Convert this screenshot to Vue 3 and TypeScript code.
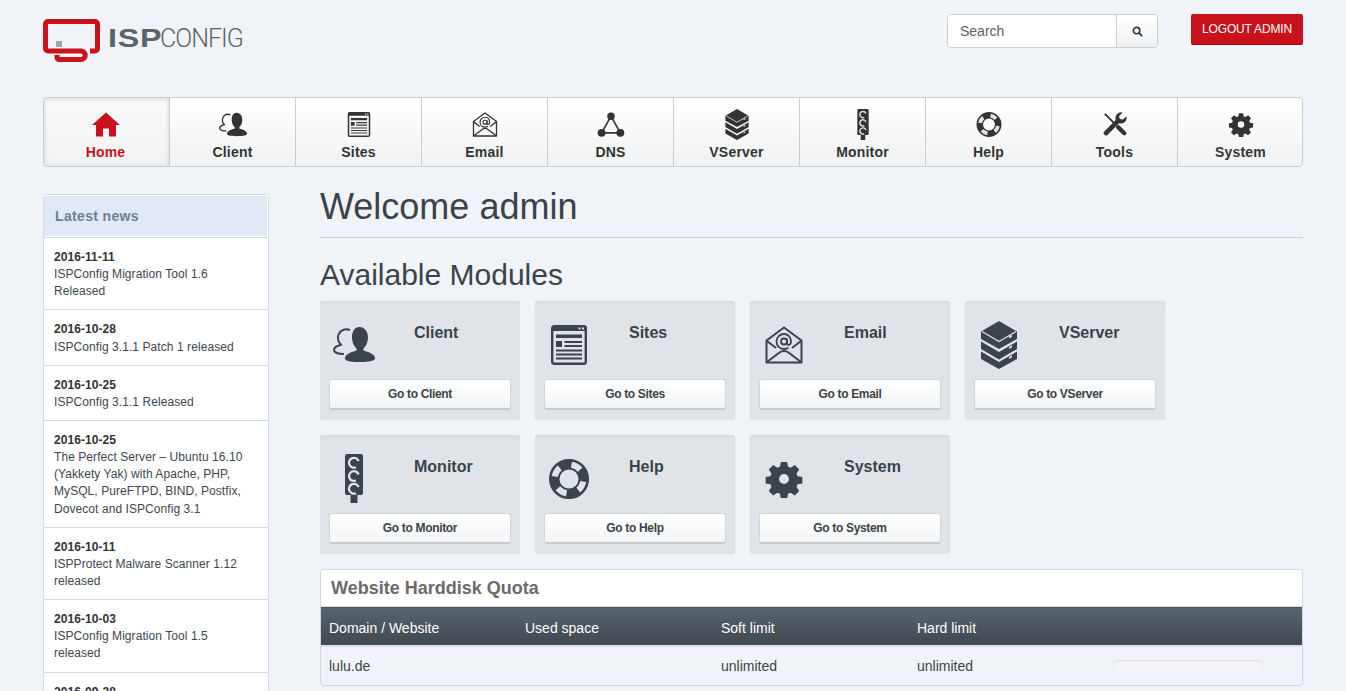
<script setup lang="ts">
interface Module {
  name: string;
  icon: string;
}

const navItems: Module[] = [
  { name: 'Home', icon: 'home' },
  { name: 'Client', icon: 'client' },
  { name: 'Sites', icon: 'sites' },
  { name: 'Email', icon: 'email' },
  { name: 'DNS', icon: 'dns' },
  { name: 'VServer', icon: 'vserver' },
  { name: 'Monitor', icon: 'monitor' },
  { name: 'Help', icon: 'help' },
  { name: 'Tools', icon: 'tools' },
  { name: 'System', icon: 'system' },
];

const modules = navItems.filter(m => !['Home', 'DNS', 'Tools'].includes(m.name));

const news = [
  { date: '2016-11-11', title: 'ISPConfig Migration Tool 1.6 Released' },
  { date: '2016-10-28', title: 'ISPConfig 3.1.1 Patch 1 released' },
  { date: '2016-10-25', title: 'ISPConfig 3.1.1 Released' },
  { date: '2016-10-25', title: 'The Perfect Server – Ubuntu 16.10 (Yakkety Yak) with Apache, PHP, MySQL, PureFTPD, BIND, Postfix, Dovecot and ISPConfig 3.1' },
  { date: '2016-10-11', title: 'ISPProtect Malware Scanner 1.12 released' },
  { date: '2016-10-03', title: 'ISPConfig Migration Tool 1.5 released' },
  { date: '2016-09-28', title: 'ISPConfig 3.1 Released' },
];
</script>

<template>
  <div class="page">
    <svg class="sprite" aria-hidden="true">
      <symbol id="i-home" viewBox="0 0 28 24">
        <path fill="currentColor" d="M14 0 28 12.500h-4V24h-7v-8h-6v8H4V12.500H0z" />
      </symbol>
      <symbol id="i-client" viewBox="0 0 42 35">
        <path fill="currentColor" d="M26.500 0c5 0 8.500 4.500 8.500 10.500 0 4.500-1.800 8.500-4.500 11v2c4 1.500 11.500 3 11.500 8 0 2.300-5 3.500-15.500 3.500S12 33.800 12 31.500c0-5 7.500-6.500 11.500-8v-2c-2.700-2.500-4.500-6.500-4.500-11C19 4.500 21.500 0 26.500 0z" />
        <path fill="none" stroke="currentColor" stroke-width="2" d="M17 3C9.500 0 5 6 5 11c0 3 1.500 5.500 3.500 7M9 17.500C4.500 18.500 1 20 1 23c0 2.500 4.500 4 10 4" />
      </symbol>
      <symbol id="i-sites" viewBox="0 0 36 40">
        <rect x="1.200" y="1.200" width="33.600" height="37.600" rx="2" fill="none" stroke="currentColor" stroke-width="2.400" />
        <path fill="currentColor" d="M1 1h34v5H1zM5 9.500h26v3.500H5zM5 16h6v6H5z" />
        <path fill="none" stroke="currentColor" stroke-width="1.800" d="M13.500 17h17.500M13.500 21h17.500M5 25.500h26M5 29.500h26M5 33.500h26" />
        <path fill="#e0e3e8" d="M27.500 2.500h2v2h-2zM31 2.500h2v2h-2z" />
      </symbol>
      <symbol id="i-email" viewBox="0 0 38 38">
        <path fill="none" stroke="currentColor" stroke-width="2" stroke-linejoin="round" d="M1.500 14.500 19 1.500l17.500 13v22h-35z" />
        <path fill="none" stroke="currentColor" stroke-width="2" d="M2 36 14.500 26.500c3-2 6-2 9 0L36 36M2 15l9 7M36 15l-9 7" />
        <circle cx="19" cy="15.500" r="3" fill="none" stroke="currentColor" stroke-width="1.800" />
        <path fill="none" stroke="currentColor" stroke-width="1.800" d="M22 12.500v4.500c0 2.800 4 2.500 4-1.500 0-4.500-3-7.500-7-7.500s-7.500 3.200-7.500 7.500 3.200 7.500 7.500 7.500c1.800 0 3.200-.4 4.500-1.200" />
      </symbol>
      <symbol id="i-dns" viewBox="0 0 26 24">
        <path fill="none" stroke="currentColor" stroke-width="1.600" d="M13 4 4 20h18z" />
        <circle cx="13" cy="4" r="3.600" fill="currentColor" />
        <circle cx="4" cy="20" r="3.800" fill="currentColor" />
        <circle cx="22" cy="20" r="3.800" fill="currentColor" />
      </symbol>
      <symbol id="i-vserver" viewBox="0 0 36 48">
        <path fill="currentColor" d="M18 0 36 10.500v7.500L18 28 0 18v-7.500z" />
        <path fill="currentColor" d="M0 20.500 18 31l18-10.500V28L18 38.500 0 28z" />
        <path fill="currentColor" d="M0 30.500 18 41l18-10.500V38L18 48 0 38z" />
        <path fill="none" stroke="#e0e3e8" stroke-width="1.300" d="M1 10.500 18 20.500 35 10.500" />
        <path fill="#e0e3e8" d="M28 15.500l3-1.700v2l-3 1.700zM28 26l3-1.700v2l-3 1.700zM28 36l3-1.700v2L28 38z" />
      </symbol>
      <symbol id="i-monitor" viewBox="0 0 18 49">
        <path fill="currentColor" d="M2 0h14a2 2 0 0 1 2 2v37a2 2 0 0 1-2 2h-3.500v8h-7v-8H2a2 2 0 0 1-2-2V2a2 2 0 0 1 2-2z" />
        <g fill="none" stroke="#e0e3e8" stroke-width="2.300">
          <path d="M13.600 7.200A4.900 4.900 0 1 0 11 13.200" />
          <path d="M13.600 20.500A4.900 4.900 0 1 0 11 26.500" />
          <path d="M13.600 33.200A4.900 4.900 0 1 0 11 39.200" />
        </g>
      </symbol>
      <symbol id="i-help" viewBox="0 0 40 40">
        <circle cx="20" cy="20" r="14.750" fill="none" stroke="currentColor" stroke-width="10.500" />
        <g fill="none" stroke="#e0e3e8" stroke-width="6">
          <path d="M15 6.400A14.500 14.500 0 0 1 25 6.400" transform="rotate(30 20 20)" />
          <path d="M15 6.400A14.500 14.500 0 0 1 25 6.400" transform="rotate(120 20 20)" />
          <path d="M15 6.400A14.500 14.500 0 0 1 25 6.400" transform="rotate(210 20 20)" />
          <path d="M15 6.400A14.500 14.500 0 0 1 25 6.400" transform="rotate(300 20 20)" />
        </g>
      </symbol>
      <symbol id="i-tools" viewBox="0 0 26 26">
        <path fill="none" stroke="currentColor" stroke-width="2" d="M2 2l12 12" />
        <path fill="none" stroke="currentColor" stroke-width="4.600" stroke-linecap="round" d="M16.500 16.500l6.500 6.500" />
        <path fill="currentColor" d="M25.500 4.800a6.300 6.300 0 0 1-8 7.400L5 24.600a2.500 2.500 0 0 1-3.600-3.500L13.800 8.600a6.300 6.300 0 0 1 7.400-8.100l-3.700 3.700.6 3.300 3.300.6z" />
      </symbol>
      <symbol id="i-system" viewBox="0 0 38 38">
        <path fill="currentColor" fill-rule="evenodd" d="M15.500 0h7l1 5.300 3 1.200 4.500-3 4.900 4.900-3 4.500 1.200 3 5.300 1v7l-5.300 1-1.200 3 3 4.500-4.900 4.900-4.500-3-3 1.200-1 5.300h-7l-1-5.300-3-1.200-4.500 3-4.900-4.900 3-4.500-1.200-3-5.300-1v-7l5.300-1 1.200-3-3-4.500 4.900-4.900 4.500 3 3-1.200zM19 13.500a5.500 5.500 0 1 0 0 11 5.500 5.500 0 0 0 0-11z" transform="translate(1.900 1.900) scale(.9)" />
      </symbol>
    </svg>

    <div class="wrap">
      <header class="top">
        <div class="logo">
          <svg class="logo-mark" viewBox="0 0 58 44" width="58" height="44">
            <path fill="none" stroke="#c8131b" stroke-width="5" d="M47 32h5a2.500 2.500 0 0 0 2.500-2.500V5A2.500 2.500 0 0 0 52 2.500H5A2.500 2.500 0 0 0 2.500 5v24.500A2.500 2.500 0 0 0 5 32h33a4.250 4.250 0 0 1 0 8.500H16a2 2 0 0 1-2-2V36" />
            <rect x="13" y="22" width="6" height="6" fill="#a3a6a9" />
          </svg>
          <div class="logo-text"><b>ISP</b><span>CONFIG</span></div>
        </div>
        <div class="top-right">
          <div class="search">
            <input type="text" placeholder="Search" />
            <button type="button" aria-label="Search">
              <svg viewBox="0 0 12 12" width="11" height="11">
                <circle cx="5" cy="5" r="3.500" fill="none" stroke="#333b42" stroke-width="1.800" />
                <path d="M7.800 7.800 11 11" stroke="#333b42" stroke-width="2" fill="none" />
              </svg>
            </button>
          </div>
          <a class="logout">LOGOUT ADMIN</a>
        </div>
      </header>

      <nav class="nav">
        <a v-for="(item, i) in navItems" :key="item.name" class="nav-item" :class="{ active: i === 0 }">
          <svg :class="'n-' + item.icon"><use :href="'#i-' + item.icon" /></svg>
          <span>{{ item.name }}</span>
        </a>
      </nav>

      <div class="columns">
        <aside class="sidebar">
          <h3>Latest news</h3>
          <div v-for="(n, i) in news" :key="i" class="news-item">
            <b>{{ n.date }}</b>
            <div>{{ n.title }}</div>
          </div>
        </aside>

        <main class="content">
          <h1>Welcome admin</h1>
          <h2>Available Modules</h2>
          <div class="modules">
            <div v-for="m in modules" :key="m.name" class="module">
              <div class="module-head">
                <div class="module-icon">
                  <svg :class="'m-' + m.icon"><use :href="'#i-' + m.icon" /></svg>
                </div>
                <h4>{{ m.name }}</h4>
              </div>
              <button type="button" class="go">Go to {{ m.name }}</button>
            </div>
          </div>

          <section class="quota">
            <h3>Website Harddisk Quota</h3>
            <table>
              <thead>
                <tr>
                  <th>Domain / Website</th>
                  <th>Used space</th>
                  <th>Soft limit</th>
                  <th>Hard limit</th>
                  <th></th>
                </tr>
              </thead>
              <tbody>
                <tr>
                  <td>lulu.de</td>
                  <td></td>
                  <td>unlimited</td>
                  <td>unlimited</td>
                  <td><div class="bar"></div></td>
                </tr>
              </tbody>
            </table>
          </section>
        </main>
      </div>
    </div>
  </div>
</template>

<style>
html, body {
  margin: 0;
  background: #f0f4f8;
  overflow: hidden;
}
</style>

<style scoped>
.page {
  height: 691px;
  overflow: hidden;
  background: #f0f4f8;
  color: #3b434a;
  font-family: "Liberation Sans", Arial, sans-serif;
  font-size: 12px;
}
.sprite {
  display: none;
}
.wrap {
  width: 1260px;
  margin-left: 43px;
}

/* header */
.top {
  height: 97px;
  display: flex;
  justify-content: space-between;
  align-items: flex-start;
}
.logo {
  display: flex;
  align-items: flex-start;
  padding-top: 19px;
}
.logo-mark {
  display: block;
}
.logo-text {
  margin: 7px 0 0 7px;
  font-size: 25px;
  line-height: 25px;
  color: #5b6469;
  white-space: nowrap;
}
.logo-text b {
  font-weight: 700;
  letter-spacing: 0.6px;
  display: inline-block;
  transform: scaleX(1.29);
  transform-origin: left;
  margin-right: 10px;
}
.logo-text span {
  font-family: Roboto, sans-serif;
  font-weight: 300;
  letter-spacing: -1px;
}
.top-right {
  display: flex;
  gap: 33px;
  padding-top: 14px;
}
.search {
  display: flex;
  width: 211px;
  height: 34px;
  box-sizing: border-box;
  border: 1px solid #ccc;
  border-radius: 4px;
  overflow: hidden;
}
.search input {
  flex: 1;
  min-width: 0;
  border: 0;
  padding: 0 12px;
  font: 14px "Liberation Sans", Arial, sans-serif;
  background: #fff;
  outline: none;
}
.search input::placeholder {
  color: #555f66;
  opacity: 1;
}
.search button {
  width: 41px;
  padding: 2px 0 0;
  border: 0;
  border-left: 1px solid #ccc;
  background: linear-gradient(#fff, #eff1f3);
}
.logout {
  width: 112px;
  height: 31px;
  box-sizing: border-box;
  line-height: 30px;
  text-align: center;
  letter-spacing: -0.15px;
  color: #fff;
  background: #c8111b;
  border-radius: 2px;
  border-bottom: 1px solid #a30d15;
}

/* main nav */
.nav {
  display: flex;
  height: 70px;
  box-sizing: border-box;
  border: 1px solid #ccc;
  border-radius: 4px;
  overflow: hidden;
  background: linear-gradient(#fff, #eff1f3);
}
.nav-item {
  flex: 0 0 126px;
  box-sizing: border-box;
  border-left: 1px solid #ccc;
  display: flex;
  flex-direction: column;
  align-items: center;
  font-size: 14px;
  font-weight: 700;
  color: #333;
  letter-spacing: 0.2px;
}
.nav-item:first-child {
  border-left: 0;
  flex-basis: 125px;
  padding-right: 2px;
}
.nav-item.active {
  color: #c8111b;
  box-shadow: inset 0 1px 5px rgba(0, 0, 0, 0.16);
  background: linear-gradient(#f9fafb, #f0f2f4);
}
.nav-item svg {
  width: 28px;
  height: 25px;
  margin-top: 14px;
  color: #333;
  flex: none;
}
.nav-item .n-vserver,
.nav-item .n-monitor {
  height: 31px;
  margin: 11px 0 -3px;
}
.nav-item .n-tools {
  height: 24px;
  margin-bottom: 1px;
}
.nav-item.active svg {
  color: #c8111b;
}
.nav-item span {
  margin-top: 7px;
  line-height: 16px;
}

/* columns */
.columns {
  display: grid;
  grid-template-columns: 226px 983px;
  gap: 51px;
  margin-top: 27px;
}
.sidebar {
  border: 1px solid #d0dcea;
  border-radius: 4px;
  background: #fff;
}
.sidebar h3 {
  margin: 0;
  height: 42px;
  line-height: 40px;
  padding-left: 11px;
  font-size: 14px;
  letter-spacing: 0.35px;
  color: #6d8093;
  background: #e0e9f5;
  border: solid #fff;
  border-width: 1px 1px 1px 0;
  box-sizing: border-box;
}
.news-item {
  padding: 10px 12px 9px 10px;
  line-height: 1.42857;
  letter-spacing: 0.07px;
  border-top: 1px solid #d0dcea;
  color: #3e4650;
}
.news-item b {
  color: #333;
  display: block;
  padding-top: 1px;
}

/* content */
h1 {
  margin: 0;
  height: 43px;
  font-size: 36px;
  font-weight: 400;
  line-height: 26px;
  border-bottom: 1px solid #c5ccd2;
}
h2 {
  margin: 21px 0 0;
  font-size: 30px;
  font-weight: 400;
  line-height: 32px;
}
.modules {
  display: flex;
  flex-wrap: wrap;
  gap: 15px;
  margin-top: 10px;
}
.module {
  width: 200px;
  height: 119px;
  box-sizing: border-box;
  padding: 9px;
  background: #e0e3e8;
  border-radius: 4px;
  box-shadow: inset 0 2px 2px rgba(0, 0, 0, 0.04), 0 0 1px rgba(0, 0, 0, 0.15);
}
.module-head {
  display: flex;
  height: 69px;
}
.module-icon {
  width: 49px;
  margin-right: 36px;
  display: flex;
  align-items: center;
  justify-content: center;
  flex: none;
}
.module-icon svg {
  color: #3b434b;
  width: 42px;
  height: 35px;
  flex: none;
}
.module-icon .m-vserver {
  height: 48px;
  width: 36px;
}
.module-icon .m-monitor {
  height: 49px;
  width: 18px;
}
.module-icon .m-help {
  width: 40px;
  height: 40px;
}
.module-icon .m-system,
.module-icon .m-email {
  width: 38px;
  height: 38px;
}
.module-icon .m-sites {
  height: 40px;
  width: 36px;
}
h4 {
  margin: 13px 0 0;
  font-size: 16px;
  line-height: 20px;
}
.go {
  display: block;
  width: 182px;
  height: 31px;
  box-sizing: border-box;
  border: 1px solid #d3d5d8;
  border-bottom: 2px solid #c9cacb;
  border-radius: 3px;
  background: linear-gradient(#fff, #f2f4f6);
  font: 700 12px "Liberation Sans", Arial, sans-serif;
  letter-spacing: -0.33px;
  color: #3b434a;
}

/* quota table */
.quota {
  margin-top: 15px;
  height: 117px;
  box-sizing: border-box;
  border: 1px solid #d0d6db;
  border-radius: 4px;
  overflow: hidden;
}
.quota h3 {
  margin: 0;
  height: 36px;
  line-height: 36px;
  padding-left: 10px;
  background: #fff;
  font-size: 18px;
  color: #6b6b6b;
}
.quota table {
  width: 100%;
  table-layout: fixed;
  border-collapse: collapse;
  font-size: 14px;
  border-top: 1px solid #d0d6db;
}
.quota th {
  height: 39px;
  padding: 5px 0 0 8px;
  box-sizing: border-box;
  width: 196px;
  text-align: left;
  font-weight: 400;
  color: #fff;
  background: linear-gradient(#59646c, #3f4850);
}
.quota th:last-child,
.quota td:last-child {
  width: auto;
}
.quota td {
  height: 38px;
  padding: 1px 0 0 8px;
  box-sizing: border-box;
  border-top: 2px solid #dfe3e7;
}
.bar {
  width: 150px;
  height: 10px;
  margin-top: -2px;
  background: #f5f5f5;
  border-radius: 4px;
  box-shadow: inset 0 1px 2px rgba(0, 0, 0, 0.1);
}
</style>
